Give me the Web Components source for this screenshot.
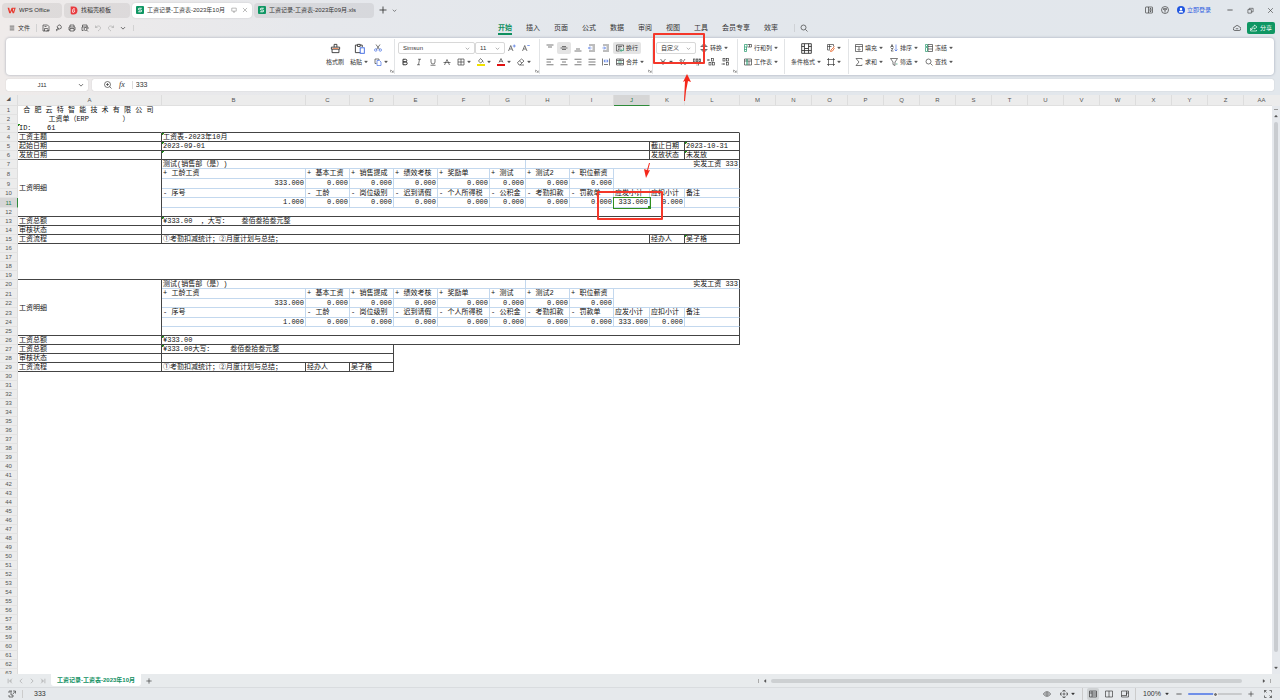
<!DOCTYPE html>
<html lang="zh-CN">
<head>
<meta charset="utf-8">
<title>工资记录-工资表-2023年10月</title>
<style>
  html, body { height: 100%; }
  body {
    margin: 0;
    font: 6px/8px "Liberation Sans", "Noto Sans CJK SC", sans-serif;
    color: #333;
    --green: #0f8f5f;
    --caret: #555;
  }
</style>
</head>
<body>
<wps-app>
  <title-bar slot="title">
    <doc-tab icon="wps" style="--w:60px;--pad:5px;--size:9px">WPS Office</doc-tab>
    <doc-tab icon="docer" style="--w:66px;--pad:5px;--size:9px">找稻壳模板</doc-tab>
    <doc-tab icon="sheet" active style="--w:120px">工资记录-工资表-2023年10月</doc-tab>
    <doc-tab icon="sheet" style="--w:120px">工资记录-工资表-2023年09月.xls</doc-tab>
  </title-bar>
  <menu-bar slot="menu">
    <menu-tab active>开始</menu-tab>
    <menu-tab>插入</menu-tab>
    <menu-tab>页面</menu-tab>
    <menu-tab>公式</menu-tab>
    <menu-tab>数据</menu-tab>
    <menu-tab>审阅</menu-tab>
    <menu-tab>视图</menu-tab>
    <menu-tab>工具</menu-tab>
    <menu-tab>会员专享</menu-tab>
    <menu-tab>效率</menu-tab>
  </menu-bar>
  <ribbon-bar slot="ribbon">
    <ribbon-group launcher style="--group:67px">
      <ribbon-row>
        <tool-button icon="brush" label="格式刷" big style="--w:24px"></tool-button>
        <tool-button icon="paste" label="粘贴" caret big style="--w:24px"></tool-button>
        <ribbon-stack>
          <tool-button icon="cut" title="剪切" style="--w:18px"></tool-button>
          <tool-button icon="copy" title="复制" caret style="--w:18px"></tool-button>
        </ribbon-stack>
      </ribbon-row>
    </ribbon-group>
    <ribbon-group launcher style="--group:137px">
      <ribbon-stack>
        <ribbon-row>
          <drop-box name="字体" value="Simsun" style="--w:77px"></drop-box>
          <drop-box name="字号" value="11" style="--w:30px"></drop-box>
          <tool-button icon="fontUp" title="增大字号"></tool-button>
          <tool-button icon="fontDown" title="减小字号"></tool-button>
        </ribbon-row>
        <ribbon-row>
          <tool-button icon="bold" title="加粗"></tool-button>
          <tool-button icon="italic" title="倾斜"></tool-button>
          <tool-button icon="underline" title="下划线"></tool-button>
          <tool-button icon="strike" title="删除线"></tool-button>
          <tool-button icon="border" title="边框" caret style="--w:20px"></tool-button>
          <tool-button icon="fill" title="填充颜色" caret style="--w:20px"></tool-button>
          <tool-button icon="fontColor" title="字体颜色" caret style="--w:20px"></tool-button>
          <tool-button icon="eraser" title="清除" caret style="--w:20px"></tool-button>
        </ribbon-row>
      </ribbon-stack>
    </ribbon-group>
    <ribbon-group launcher style="--group:105px">
      <ribbon-stack>
        <ribbon-row>
          <tool-button icon="vTop" title="顶端对齐"></tool-button>
          <tool-button icon="vMid" title="垂直居中" pressed></tool-button>
          <tool-button icon="vBottom" title="底端对齐"></tool-button>
          <tool-button icon="outdent" title="减少缩进"></tool-button>
          <tool-button icon="indent" title="增加缩进"></tool-button>
          <tool-button icon="wrap" label="换行" pressed style="--w:28px"></tool-button>
        </ribbon-row>
        <ribbon-row>
          <tool-button icon="left" title="左对齐"></tool-button>
          <tool-button icon="center" title="居中"></tool-button>
          <tool-button icon="right" title="右对齐"></tool-button>
          <tool-button icon="justify" title="两端对齐"></tool-button>
          <tool-button icon="spread" title="分散对齐"></tool-button>
          <tool-button icon="merge" label="合并" caret style="--w:34px"></tool-button>
        </ribbon-row>
      </ribbon-stack>
    </ribbon-group>
    <ribbon-group launcher note style="--group:77px">
      <ribbon-stack>
        <ribbon-row>
          <drop-box name="数字格式" value="自定义" style="--w:40px"></drop-box>
          <tool-button icon="convert" label="转换" caret style="--w:36px;--pad:4px"></tool-button>
        </ribbon-row>
        <ribbon-row>
          <tool-button icon="yen" title="货币" caret style="--w:20px"></tool-button>
          <tool-button icon="percent" title="百分比"></tool-button>
          <tool-button icon="thousand" title="千位分隔"></tool-button>
          <tool-button icon="decMore" title="增加小数位"></tool-button>
          <tool-button icon="decLess" title="减少小数位"></tool-button>
        </ribbon-row>
      </ribbon-stack>
    </ribbon-group>
    <ribbon-group style="--group:43px">
      <ribbon-stack>
        <tool-button icon="rowcol" label="行和列" caret style="--w:38px"></tool-button>
        <tool-button icon="worksheet" label="工作表" caret style="--w:38px"></tool-button>
      </ribbon-stack>
    </ribbon-group>
    <ribbon-group style="--group:60px">
      <ribbon-row>
        <tool-button icon="condition" label="条件格式" caret big style="--w:36px"></tool-button>
        <ribbon-stack>
          <tool-button icon="tableStyle" title="表格样式" caret style="--w:22px"></tool-button>
          <tool-button icon="cellStyle" title="单元格" caret style="--w:22px"></tool-button>
        </ribbon-stack>
      </ribbon-row>
    </ribbon-group>
    <ribbon-group last style="--group:108px">
      <ribbon-stack>
        <ribbon-row>
          <tool-button icon="fillDown" label="填充" caret style="--w:35px;--pad:3px"></tool-button>
          <tool-button icon="sort" label="排序" caret style="--w:35px;--pad:3px"></tool-button>
          <tool-button icon="freeze" label="冻结" caret style="--w:35px;--pad:3px"></tool-button>
        </ribbon-row>
        <ribbon-row>
          <tool-button icon="sum" label="求和" caret style="--w:35px;--pad:3px"></tool-button>
          <tool-button icon="filter" label="筛选" caret style="--w:35px;--pad:3px"></tool-button>
          <tool-button icon="search" label="查找" caret style="--w:35px;--pad:3px"></tool-button>
        </ribbon-row>
      </ribbon-stack>
    </ribbon-group>
  </ribbon-bar>
  <formula-bar slot="formula" cell="J11" value="333"></formula-bar>
  <sheet-grid slot="grid"></sheet-grid>
  <sheet-tabs slot="tabs">工资记录-工资表-2023年10月</sheet-tabs>
  <status-bar slot="status">333</status-bar>
</wps-app>

<script>
// 图标: 全部画在 16x16 里
const ICONS = {
  wps: '<path d="M1 3h3l1.500 7L8 3.500h2L11.500 10 13 5H8.500V3H15.500L12.500 13h-2.500L8.500 8.500 6.500 13H4z" fill="#e8392f" stroke="none"/>',
  docer: '<path d="M3 1h5a7 7 0 0 1 0 14H5a2 2 0 0 1-2-2z" fill="#e83a3e" stroke="none"/><path d="M6.500 11.500V6.500L9 4v3.500a2 2 0 1 1-2.500 3" stroke="#fff" stroke-width="1.400"/>',
  sheet: '<rect width="16" height="16" rx="2" fill="#0f9663" stroke="none"/><path d="M11.500 4.500H6.500a1.500 1.500 0 0 0 0 3.500h3a1.700 1.700 0 0 1 0 3.500H4.500" stroke="#fff" stroke-width="1.900"/>',
  monitor: '<path d="M2 3h12v8H2zM6 14h4M8 11v3"/>',
  close: '<path d="M2.500 2.500l11 11M13.500 2.500l-11 11"/>',
  plus: '<path d="M8 1v14M1 8h14" stroke-width="1.700"/>',
  minus: '<path d="M1 8h14" stroke-width="2"/>',
  chevron: '<path d="M2.500 5.500L8 11l5.500-5.500" stroke-width="1.800"/>',
  hamburger: '<path d="M2 3h12M2 8h12M2 13h12" stroke-width="1.800"/>',
  save: '<path d="M2 2h9l3 3v9H2zM5 14V9h6v2M5 5h4M9 14l5-2"/>',
  exportIt: '<path d="M6 9a4 4 0 1 1 3 1H6zM6 7v4l-4 3M2 11h2"/>',
  print: '<path d="M4 6V2h8v4M4 12H2V6h12v6h-2M4 9h8v5H4z"/>',
  preview: '<path d="M3 6V2h9v4M5 13H2V6h12v4"/><circle cx="9" cy="10" r="3"/><path d="M11 12l3 3"/>',
  undo: '<path d="M3 3v4h4M3 7c3-4 9-4 10 0 0 3-2 5-5 7" stroke="#aaa"/>',
  redo: '<path d="M13 3v4H9M13 7C10 3 4 3 3 7c0 3 2 5 5 7" stroke="#aaa"/>',
  search: '<circle cx="7" cy="7" r="5"/><path d="M11 11l4 4"/>',
  panels: '<rect x="1" y="2" width="14" height="12" rx="1"/><path d="M7 2v12M10 5h2v6h-2z"/>',
  cube: '<circle cx="8" cy="8" r="7"/><path d="M4 6l4 2 4-2M8 8v5M4 6l4-1 4 1"/>',
  user: '<circle cx="8" cy="8" r="8" fill="#1f55e0" stroke="none"/><circle cx="8" cy="6" r="2.500" fill="#fff" stroke="none"/><path d="M3.500 13a4.500 4 0 0 1 9 0z" fill="#fff" stroke="none"/>',
  restore: '<path d="M2 6h8v8H2zM5 6V3h9v8h-4"/>',
  cloud: '<path d="M4 13a3.500 3.500 0 0 1 0-7 4.500 4.500 0 0 1 8.500 0A3.500 3.500 0 0 1 12 13zM5.500 9.500h5"/>',
  share: '<path d="M9 2l5 4-5 4V8C6 8 4 9 3 12c0-5 2-7 6-8zM1 8v6h12v-2"/>',
  brush: '<path d="M2 6h12v3H2zM3 9v5h10V9M6 6V2h4v4"/><path d="M4 8h8" stroke="#ee8a5a"/>',
  paste: '<path d="M9 14H2V3h3M9 3h3v3M5 2h4v3H5z"/><rect x="9" y="7" width="6" height="8" stroke="#3a66e0"/>',
  cut: '<path d="M4 1l7 10M12 1L5 11"/><circle cx="3.500" cy="12" r="2.500" stroke="#3a66e0"/><circle cx="12.500" cy="12" r="2.500" stroke="#3a66e0"/>',
  copy: '<path d="M10 4V2H2v9h3"/><path d="M6 5h5l3 3v7H6z" stroke="#3a66e0"/>',
  fontUp: '<path d="M1 14L5.500 3 10 14M3 10h5"/><path d="M12.500 1v6M9.500 4h6" stroke="#3a66e0"/>',
  fontDown: '<path d="M1 14L5.500 3 10 14M3 10h5"/><path d="M10.500 3h5" stroke="#3a66e0"/>',
  bold: '<path d="M4 2.500h5a2.600 2.600 0 0 1 0 5.300H4zM4 7.800h5.500a2.800 2.800 0 0 1 0 5.700H4z" stroke-width="2"/>',
  italic: '<path d="M6 2.500h6M4 13.500h6M9 2.500l-2 11"/>',
  underline: '<path d="M4 2v6a4 4 0 0 0 8 0V2M3 14.500h10"/>',
  strike: '<path d="M3 14l5-11 5 11M1 9h14"/>',
  border: '<path d="M2 2h12v12H2zM2 8h12M8 2v12"/>',
  fill: '<path d="M7 1l5 5-5 4-4-4zM12 7l1 2"/><path d="M0 14h16" stroke="#f0e000" stroke-width="4"/>',
  fontColor: '<path d="M4 9l4-8 4 8M5.500 6.500h5"/><path d="M0 14h16" stroke="#e01010" stroke-width="4"/>',
  eraser: '<path d="M1 9l8-7 5 4-8 8H4zM5 6l5 4M6 14h8"/>',
  vTop: '<path d="M1 2h14M4 6h8"/>',
  vMid: '<path d="M4 5h8M1 8h14M4 11h8"/>',
  vBottom: '<path d="M4 10h8M1 14h14"/>',
  outdent: '<path d="M2 2h12M9 6h5M9 10h5M2 14h12"/><path d="M7 8H1M4 5L1 8l3 3" stroke="#3a66e0"/>',
  indent: '<path d="M2 2h12M9 6h5M9 10h5M2 14h12"/><path d="M1 8h6M4 5l3 3-3 3" stroke="#3a66e0"/>',
  wrap: '<path d="M7 14H1V2h14v5M4 5h8M4 8h5M4 11h3"/><path d="M15 8v5H9M11 10l-3 3 3 2" stroke="#0f8f5f"/>',
  left: '<path d="M1 2.500h14M1 8h9M1 13.500h14"/>',
  center: '<path d="M1 2.500h14M4 8h8M1 13.500h14"/>',
  right: '<path d="M1 2.500h14M6 8h9M1 13.500h14"/>',
  justify: '<path d="M1 2.500h14M1 8h14M1 13.500h14"/>',
  spread: '<path d="M1 1v14M15 1v14M4 13h8"/><path d="M4 6h8M6 3L4 6l2 3M10 3l2 3-2 3" stroke="#3a66e0"/>',
  merge: '<path d="M1 2h14v12H1zM1 5h14M1 11h14M8 2v3M8 11v3"/><path d="M4 8h8" stroke="#0f8f5f"/>',
  convert: '<path d="M4 5V2h8v3M4 11v3h8v-3M1 5h5M10 5h5M1 11h5M10 11h5"/>',
  yen: '<path d="M3 2l5 6 5-6M8 8v6M4 8h8M4 11h8"/>',
  percent: '<path d="M12 2L4 14"/><circle cx="4" cy="5" r="2"/><circle cx="12" cy="11" r="2"/>',
  thousand: '<rect x="1" y="2" width="3" height="6"/><rect x="6.500" y="2" width="3" height="6"/><rect x="12" y="2" width="3" height="6"/><path d="M5 11h8M8 13v2M11 12v3"/>',
  decMore: '<path d="M1 4h5M3 2L1 4l2 2"/><rect x="9" y="1" width="4" height="5"/><rect x="4" y="9" width="4" height="5"/><rect x="11" y="9" width="4" height="5"/>',
  decLess: '<rect x="4" y="1" width="4" height="5"/><rect x="11" y="1" width="4" height="5"/><path d="M1 12h6M5 10l2 2-2 2"/><rect x="11" y="9" width="4" height="5"/>',
  rowcol: '<path d="M7 1h8v5H7M11 1v5" /><path d="M1 1h5v5H1zM1 6v9h4V6M1 11h4" stroke="#0f8f5f"/>',
  worksheet: '<path d="M1 2h14v12H1zM1 6h14M10 6v8"/><path d="M6 2v12" stroke="#0f8f5f" stroke-width="2"/>',
  condition: '<path d="M1 1h14v14H1zM5 1v14M11 1v14M1 5h4M11 5h4M1 11h14M5 8h6"/>',
  tableStyle: '<path d="M13 5V1H1v11h5M1 5h8M5 1v10"/><path d="M15 5l-7 7-1 3 4-1 4-6" stroke="#e9703a" stroke-width="1.800"/>',
  cellStyle: '<path d="M3 0v16M13 0v16M0 3h16M0 13h16"/>',
  fillDown: '<path d="M1 1h14v14H1zM1 5h14M8 6v6M5 10l3 3 3-3"/>',
  sort: '<path d="M1 7l3-6 3 6M2 5h4M2 9h4l-4 5h5"/><path d="M12 1v13M9 11l3 3 3-3" stroke="#3a66e0"/>',
  freeze: '<path d="M6 1h9v14H6zM6 5h9M6 10h9"/><path d="M1 1h4v4H1zM1 7h4v8H1z" stroke="#0f8f5f"/>',
  sum: '<path d="M14 3V1H2l6 7-6 7h12v-2"/>',
  filter: '<path d="M1 1h14L10 8v7l-4-2V8z"/><path d="M12 12h3" stroke="#0f8f5f"/>',
  zoomFx: '<circle cx="7" cy="7" r="6"/><path d="M11 11l4 4M4 7h6M7 4v6"/>',
  launcher: '<path d="M2 3v10M13 6v7H6M4 4l9 9" stroke-width="2"/>',
  first: '<path d="M3 2v12M13 2L7 8l6 6M7 8h6"/>',
  prev: '<path d="M11 2L5 8l6 6"/>',
  next: '<path d="M5 2l6 6-6 6"/>',
  last: '<path d="M13 2v12M3 2l6 6-6 6M3 8h6"/>',
  macro: '<path d="M2 6V2h6M2 10v4h8v-4M6 2v8h4M10 2h5v5M14 3l-4 5"/>',
  eye: '<path d="M1 8c3-6 11-6 14 0-3 6-11 6-14 0z"/><circle cx="8" cy="8" r="2.500"/>',
  target: '<circle cx="8" cy="8" r="2"/><path d="M6 4V1h4v3M6 12v3h4v-3M4 6H1v4h3M12 6h3v4h-3"/>',
  viewNormal: '<path d="M1 2h14v12H1zM1 6h14M6 2v12M6 10h9"/>',
  viewBreak: '<path d="M1 2h14v12H1zM8 2v12"/>',
  viewPage: '<path d="M1 2h14v12H1zM1 11h10V6M11 6h4M11 2v9"/>',
  full: '<path d="M1 5V1h4M11 1h4v4M15 11v4h-4M5 15H1v-4M1 1l4 4M15 15l-4-4"/>',
  triUp: '<path d="M2 12h12L8 4z" fill="currentColor"/>',
  triDown: '<path d="M2 4h12l-6 8z" fill="currentColor"/>',
  triLeft: '<path d="M12 2v12L4 8z" fill="currentColor"/>',
  triRight: '<path d="M4 2v12l8-6z" fill="currentColor"/>',
};

const svg = (name, size = 10) =>
  `<svg width="${size}" height="${size}" viewBox="0 0 16 16" fill="none" stroke="currentColor" stroke-width="1.300" aria-hidden="true">${ICONS[name]}</svg>`;

// 所有元素共用的基础样式
const BASE = `
  * { box-sizing: border-box; }
  :host { display: block; }
  svg { display: block; flex: none; }
  button, input, select {
    font: inherit; color: inherit; background: none;
    border: 0; margin: 0; padding: 0; outline: none;
  }
  button { display: flex; align-items: center; white-space: nowrap; }
`;

class Base extends HTMLElement {
  connectedCallback() {
    if (this.shadowRoot) return;
    this.attachShadow({ mode: 'open' });
    this.shadowRoot.innerHTML = `<style>${BASE}${this.css()}</style>${this.html()}`;
  }
  css() { return ''; }
  html() { return '<slot></slot>'; }
}

class WpsApp extends Base {
  css() {
    return `
      :host {
        display: flex; flex-direction: column; height: 100vh; overflow: hidden;
        background: linear-gradient(90deg, #efebea 0, #e6e8ec 25%, #e3e7ec 50%, #e2e7ec 100%);
      }
      slot { display: contents; }
    `;
  }
  html() {
    return ['title', 'menu', 'ribbon', 'formula', 'grid', 'tabs', 'status']
      .map(n => `<slot name="${n}"></slot>`).join('');
  }
}
customElements.define('wps-app', WpsApp);

class TitleBar extends Base {
  css() {
    return `
      :host { display: flex; align-items: center; height: 20px; padding-left: 2px; flex: none; }
      .tabs { display: flex; gap: 2px; }
      .new { display: flex; gap: 5px; padding-left: 5px; align-items: center; }
      .win { margin-left: auto; display: flex; align-items: center; }
      .win button { width: 16px; justify-content: center; }
      .win .login { width: auto; gap: 2px; color: #2c5be0; margin: 0 9px 0 4px; }
      .win .sys { width: 20px; }
    `;
  }
  html() {
    return `
      <div class="tabs"><slot></slot></div>
      <div class="new">
        <button aria-label="新建">${svg('plus', 8)}</button>
        <button aria-label="更多">${svg('chevron', 5)}</button>
      </div>
      <div class="win">
        <button aria-label="窗口">${svg('panels', 8)}</button>
        <button aria-label="应用">${svg('cube', 8)}</button>
        <button class="login">${svg('user', 8)}立即登录</button>
        <button class="sys" aria-label="最小化">${svg('minus', 6)}</button>
        <button class="sys" aria-label="还原">${svg('restore', 7)}</button>
        <button class="sys" aria-label="关闭">${svg('close', 7)}</button>
      </div>`;
  }
}
customElements.define('title-bar', TitleBar);

class DocTab extends Base {
  css() {
    return `
      button {
        width: var(--w); height: 15px; padding: 0 var(--pad, 4px); gap: 3px;
        border-radius: 4px; background: rgba(90, 80, 80, .1);
      }
      :host([active]) button { background: #fff; box-shadow: 0 0 2px rgba(0,0,0,.15); }
      span { overflow: hidden; }
      .end { display: flex; gap: 5px; margin-left: auto; color: #777; }
      svg { width: var(--size, 8px); height: var(--size, 8px); }
      .end svg { width: 6px; height: 6px; }
    `;
  }
  html() {
    const end = this.hasAttribute('active')
      ? `<i class="end">${svg('monitor', 6)}${svg('close', 6)}</i>` : '';
    return `<button>${svg(this.getAttribute('icon'))}<span><slot></slot></span>${end}</button>`;
  }
}
customElements.define('doc-tab', DocTab);

class MenuBar extends Base {
  css() {
    return `
      :host {
        display: grid; grid-template-columns: 1fr auto 1fr; align-items: center;
        height: 16px; padding: 0 5px 0 9px; flex: none;
      }
      .left, .mid, .right { display: flex; align-items: center; }
      .left { gap: 5px; }
      .file { gap: 3px; padding-right: 6px; border-right: 1px solid #d2d2d2; }
      .more { padding-right: 7px; border-right: 1px solid #d2d2d2; }
      .mid { gap: 14px; padding-left: 22px; font-size: 7px; }
      .find { padding-left: 5px; border-left: 1px solid #cfd2d6; margin-left: 2px; }
      .right { justify-content: flex-end; gap: 6px; }
      .share { height: 12px; gap: 2px; padding: 0 3px; border-radius: 2px; background: #0f9663; color: #fff; }
    `;
  }
  html() {
    const tools = [['save', '保存'], ['exportIt', '输出'], ['print', '打印'], ['preview', '预览'], ['undo', '撤销'], ['redo', '恢复']];
    return `
      <div class="left">
        <button class="file">${svg('hamburger', 6)}文件</button>
        ${tools.map(([i, t]) => `<button aria-label="${t}">${svg(i, 8)}</button>`).join('')}
        <button class="more" aria-label="更多">${svg('chevron', 6)}</button>
      </div>
      <div class="mid">
        <slot></slot>
        <button class="find" aria-label="搜索">${svg('search', 8)}</button>
      </div>
      <div class="right">
        <button aria-label="云">${svg('cloud', 8)}</button>
        <button class="share">${svg('share', 8)}分享</button>
      </div>`;
  }
}
customElements.define('menu-bar', MenuBar);

class MenuTab extends Base {
  css() {
    return `
      button { height: 13px; border-top: 2px solid transparent; border-bottom: 2px solid transparent; }
      :host([active]) button { color: var(--green); font-weight: bold; border-bottom-color: var(--green); }
    `;
  }
  html() { return '<button><slot></slot></button>'; }
}
customElements.define('menu-tab', MenuTab);

class RibbonBar extends Base {
  css() {
    return `
      :host { padding: 2px 6px 0; flex: none; }
      div {
        display: flex; justify-content: center; height: 37px; background: #fff;
        border-radius: 4px; box-shadow: 0 0 2px 1px rgba(120,130,150,.3);
      }
    `;
  }
  html() { return '<div><slot></slot></div>'; }
}
customElements.define('ribbon-bar', RibbonBar);

class RibbonGroup extends Base {
  css() {
    return `
      :host {
        display: flex; position: relative; height: 35px; margin-top: 1px;
        padding-left: 3px; border-right: 1px solid #e2e4e6;
      }
      :host([last]) { border-right: 0; }
      .in { width: var(--group); padding-top: 3px; }
      .go { align-self: flex-end; width: 4px; padding-bottom: 1px; color: #555; }
      .box {
        position: absolute; left: 0; top: -6px; width: 52px; height: 31px;
        border: 2px solid #f4372a; border-radius: 1px; pointer-events: none;
      }
      .arrow { position: absolute; left: 26px; top: 35px; z-index: 2; }
    `;
  }
  html() {
    // 红框和箭头: 数字格式的批注
    const note = this.hasAttribute('note') ? `
      <div class="box"></div>
      <svg class="arrow" width="14" height="28" viewBox="0 0 14 28"><path d="M5 27l1-20-2 1 4-8 4 8-3-1-2 10-1 10z" fill="#f4271a"/></svg>` : '';
    const go = this.hasAttribute('launcher')
      ? `<button class="go" aria-label="更多设置">${svg('launcher', 4)}</button>` : '';
    return `<div class="in"><slot></slot></div>${go}${note}`;
  }
}
customElements.define('ribbon-group', RibbonGroup);

class RibbonStack extends Base {
  css() { return ':host { display: flex; flex-direction: column; gap: 2px; }'; }
}
customElements.define('ribbon-stack', RibbonStack);

class RibbonRow extends Base {
  css() { return ':host { display: flex; align-items: center; }'; }
}
customElements.define('ribbon-row', RibbonRow);

class ToolButton extends Base {
  css() {
    return `
      button { width: var(--w, 14px); height: 12px; gap: 2px; padding: 0 0 0 var(--pad, 3px); border-radius: 2px; }
      svg { width: 8px; height: 8px; }
      svg.caret { width: 4px; height: 4px; color: var(--caret); }
      :host([pressed]) button { background: #e4e4e4; }
      :host([big]) button {
        height: 26px; flex-direction: column; justify-content: space-between; padding: 1px 0 2px;
      }
      :host([big]) .icon svg { width: 11px; height: 11px; }
      .text { display: flex; align-items: center; gap: 2px; }
    `;
  }
  html() {
    const label = this.getAttribute('label') || '';
    const caret = this.hasAttribute('caret')
      ? svg('triDown', 4).replace('<svg', '<svg class="caret"') : '';
    const text = label || caret ? `<span class="text">${label}${caret}</span>` : '';
    const name = label || this.title;
    return `<button aria-label="${name}"><span class="icon">${svg(this.getAttribute('icon'))}</span>${text}</button>`;
  }
}
customElements.define('tool-button', ToolButton);

class DropBox extends Base {
  css() {
    return `
      label { display: grid; grid-template-columns: 1fr 9px; align-items: center; width: var(--w);
        height: 12px; border: 1px solid #d8d8d8; border-radius: 2px; background: #fff; }
      select { appearance: none; grid-area: 1 / 1 / 2 / 3; height: 10px; padding-left: 4px; width: 100%; line-height: 10px; }
      svg { grid-area: 1 / 2; color: #777; pointer-events: none; }
    `;
  }
  html() {
    return `<label><select aria-label="${this.getAttribute('name')}"><option>${this.getAttribute('value')}</option></select>${svg('chevron', 5)}</label>`;
  }
}
customElements.define('drop-box', DropBox);

class FormulaBar extends Base {
  css() {
    return `
      :host { display: flex; gap: 4px; padding: 4px 6px 4px; flex: none; }
      .cell, .fx { display: flex; align-items: center; height: 12px; background: #fff; border-radius: 2px; box-shadow: 0 0 1px rgba(0,0,0,.25); }
      .cell { width: 82px; padding-right: 4px; }
      .cell input { flex: 1; min-width: 0; text-align: center; }
      .fx { flex: 1; padding-left: 12px; gap: 7px; }
      .fx input { flex: 1; border-left: 1px solid #ddd; padding-left: 3px; font-size: 7px; }
      em { font: italic 8px/8px "Liberation Serif", serif; }
    `;
  }
  html() {
    return `
      <div class="cell"><input aria-label="名称框" value="${this.getAttribute('cell')}">${svg('chevron', 6)}</div>
      <div class="fx">${svg('zoomFx', 8)}<em>fx</em><input aria-label="编辑栏" value="${this.getAttribute('value')}"></div>`;
  }
}
customElements.define('formula-bar', FormulaBar);

// 列宽 A..L, 之后每列 36
const WIDTHS = [144, 144, 44, 44, 44, 52, 36, 44, 44, 36, 35, 55];
const COLS = [...'ABCDEFGHIJKLMNOPQRSTUVWXYZ', 'AA'];
const ROWS = 63;
const TALL = [8, 9, 11, 21, 23];

// [文字, 跨列, class, 跨行]
const plusRow = [
  ['+ 工龄工资', 1, 'b'], ['+ 基本工资', 1, 'b'], ['+ 销售提成', 1, 'b'], ['+ 绩效考核', 1, 'b'],
  ['+ 奖励单', 1, 'b'], ['+ 测试', 1, 'b'], ['+ 测试2', 1, 'b'], ['+ 职位薪资', 1, 'b'], ['', 3, 'b rk', 2],
];
const minusRow = [
  ['- 序号', 1, 'b'], ['- 工龄', 1, 'b'], ['- 岗位级别', 1, 'b'], ['- 迟到请假', 1, 'b'],
  ['- 个人所得税', 1, 'b'], ['- 公积金', 1, 'b'], ['- 考勤扣款', 1, 'b'], ['- 罚款单', 1, 'b'],
  ['应发小计', 1, 'b'], ['应扣小计', 1, 'b'], ['备注', 1, 'b rk'],
];
const zero = ['0.000', 1, 'b n'];
const plusNums = [['333.000', 1, 'b n'], zero, zero, zero, zero, zero, zero, zero];
const minusNums = sel => [
  ['1.000', 1, 'b n'], zero, zero, zero, zero, zero, zero, zero,
  ['333.000', 1, sel ? 'b n sel' : 'b n'], ['0.000', 1, 'b n'], ['', 1, 'b rk'],
];
const detailHead = [
  ['工资明细', 1, 'k', 6], ['测试(销售部（是）)', 6, 'b'], ['实发工资 333', 5, 'b rk n'],
];

const DATA = {
  1: [[' 合 肥 云 特 智 能 技 术 有 限 公 司']],
  2: [['       工资单（ERP        ）']],
  3: [['ID：   61', 1, 'bk t'], ['', 11, 'bk']],
  4: [['工资主题', 1, 'k'], ['工资表-2023年10月', 11, 'k t']],
  5: [['起始日期', 1, 'k'], ['2023-09-01', 9, 'k t'], ['截止日期', 1, 'k'], ['2023-10-31', 1, 'k t']],
  6: [['发放日期', 1, 'k'], ['', 9, 'k t'], ['发放状态', 1, 'k'], ['未发放', 1, 'k t']],
  7: detailHead,
  8: plusRow,
  9: plusNums,
  10: minusRow,
  11: minusNums(true),
  12: [['', 11, 'k']],
  13: [['工资总额', 1, 'k'], ['¥333.00  ，大写：   叁佰叁拾叁元整', 11, 'k t']],
  14: [['审核状态', 1, 'k'], ['', 11, 'k']],
  15: [['工资流程', 1, 'k'], ['①考勤扣减统计；②月度计划与总结；', 9, 'k'], ['经办人', 1, 'k'], ['吴子格', 1, 'k t']],
  19: [['', 12, 'bk']],
  20: detailHead,
  21: plusRow,
  22: plusNums,
  23: minusRow,
  24: minusNums(false),
  25: [['', 11, 'k']],
  26: [['工资总额', 1, 'k'], ['¥333.00', 11, 'k t']],
  27: [['工资总额', 1, 'k'], ['¥333.00大写：    叁佰叁拾叁元整', 3, 'k t']],
  28: [['审核状态', 1, 'k'], ['', 3, 'k']],
  29: [['工资流程', 1, 'k'], ['①考勤扣减统计；②月度计划与总结；', 1, 'k'], ['经办人', 1, 'k'], ['吴子格', 1, 'k']],
};

class SheetGrid extends Base {
  css() {
    return `
      :host { display: grid; grid-template-columns: 1fr 8px; flex: 1; min-height: 0; overflow: hidden; background: #fff; }
      .view { position: relative; overflow: hidden; min-width: 0; }
      table { table-layout: fixed; border-collapse: separate; border-spacing: 0; width: ${18 + WIDTHS.reduce((a, b) => a + b) + 36 * 15}px; }
      tr { height: 9px; }
      tr.tall { height: 10px; }
      thead tr { height: 11px; }
      th { padding: 0; font-weight: normal; font-size: 6px; line-height: 8px; color: #555; background: #ececec; text-align: center; }
      thead th { border-right: 1px solid #ddd; border-bottom: 1px solid #e0e0e0; }
      tbody th { border-right: 1px solid #ddd; border-bottom: 1px solid #e2e2e2; }
      thead th.on { background: #d6d6d6; color: #1f7a4a; border-bottom-color: #2e8b3a; }
      tbody th.on { background: #d6d6d6; color: #1f7a4a; border-right-color: #2e8b3a; }
      .corner { font-size: 4px; }
      td {
        padding: 0 1px; white-space: pre; color: #111; text-spacing-trim: space-all;
        font: 7px/8px "Liberation Mono", "Noto Sans CJK SC", monospace;
        border: 0 solid transparent; border-width: 0 1px 1px 0; vertical-align: middle;
      }
      tr.tall td { line-height: 9px; }
      .k { border-color: #444; }
      .bk { border-bottom-color: #444; }
      .b { border-color: #c3d8ee; }
      .rk { border-right-color: #444; }
      .n { text-align: right; }
      .t { background: linear-gradient(135deg, #1a8a1a 2px, transparent 2px) no-repeat; }
      .sel { outline: 1px solid #2f8f1f; position: relative; }
      .sel::after { content: ""; position: absolute; right: -2px; bottom: -2px; width: 3px; height: 3px; background: #2f8f1f; }
      .bar {
        background: #e6e9ed; border-top: 11px solid #ececec; display: flex; flex-direction: column;
        align-items: center; color: #555; padding: 3px 0 4px; gap: 4px;
      }
      .thumb { flex: 1; width: 4px; border-radius: 2px; background: #c9ccd0; margin: 0 0 10px; }
      .tick { width: 4px; height: 1px; background: #999; }
      .box {
        position: absolute; left: 597px; top: 96px; width: 66px; height: 29px;
        border: 2px solid #f4372a; border-radius: 1px; pointer-events: none;
      }
      .arrow { position: absolute; left: 642px; top: 68px; }
    `;
  }
  html() {
    const cols = COLS.map((_, i) => `<col style="width:${WIDTHS[i] || 36}px">`).join('');
    const head = COLS.map(c => `<th scope="col"${c === 'J' ? ' class="on"' : ''}>${c}</th>`).join('');
    let body = '';
    for (let r = 1; r <= ROWS; r++) {
      const cells = (DATA[r] || []).map(([text, span = 1, cls = '', rows = 1]) =>
        `<td class="${cls}" colspan="${span}" rowspan="${rows}">${text}</td>`).join('');
      body += `<tr${TALL.includes(r) ? ' class="tall"' : ''}><th scope="row"${r === 11 ? ' class="on"' : ''}>${r}</th>${cells}</tr>`;
    }
    return `
      <div class="view">
        <table>
          <colgroup><col style="width:18px">${cols}</colgroup>
          <thead><tr><th class="corner">◢</th>${head}</tr></thead>
          <tbody>${body}</tbody>
        </table>
        <div class="box"></div>
        <svg class="arrow" width="10" height="16" viewBox="0 0 10 16"><path d="M7 0L5 7l-3-1 2 9 4-8-2 .5L8 0z" fill="#f4271a"/></svg>
      </div>
      <div class="bar"><i class="tick"></i>${svg('triUp', 4)}<div class="thumb"></div>${svg('triDown', 4)}</div>`;
  }
}
customElements.define('sheet-grid', SheetGrid);

class SheetTabs extends Base {
  css() {
    return `
      :host { display: flex; align-items: flex-start; height: 13px; padding-left: 7px; flex: none; background: #e8ebed; border-bottom: 1px solid #d9dcdf; }
      .nav { display: flex; gap: 5px; align-self: center; color: #888; padding-right: 5px; }
      .tab { height: 12px; padding: 0 6px; background: #fff; color: var(--green); font-weight: bold; border-radius: 0 0 3px 3px; }
      .add { align-self: center; padding-left: 5px; }
      .scroll { margin-left: auto; width: 41%; display: flex; align-items: center; align-self: center; gap: 4px; padding-right: 9px; color: #555; }
      .thumb { flex: 1; height: 4px; border-radius: 2px; background: #cdd0d2; margin-right: 16px; }
      .tick { width: 1px; height: 4px; background: #aaa; }
    `;
  }
  html() {
    const nav = [['first', '第一张'], ['prev', '上一张'], ['next', '下一张'], ['last', '最后一张']];
    return `
      <div class="nav">${nav.map(([i, t]) => `<button aria-label="${t}">${svg(i, 6)}</button>`).join('')}</div>
      <button class="tab"><slot></slot></button>
      <button class="add" aria-label="新建工作表">${svg('plus', 6)}</button>
      <div class="scroll"><i class="tick"></i>${svg('triLeft', 4)}<div class="thumb"></div>${svg('triRight', 4)}<i class="tick"></i></div>`;
  }
}
customElements.define('sheet-tabs', SheetTabs);

class StatusBar extends Base {
  css() {
    return `
      :host { display: flex; align-items: center; height: 12px; padding: 0 8px; flex: none; background: #e6e9ec; }
      .val { border-left: 1px solid #ccc; margin-left: 6px; padding-left: 11px; font-size: 7px; }
      .right { margin-left: auto; display: flex; align-items: center; }
      .right button { justify-content: center; gap: 3px; height: 12px; }
      .goto { margin: 0 7px 0 9px; }
      .view { width: 12px; margin-right: 4px; border-radius: 2px; }
      .views { display: flex; padding-left: 4px; border: 1px solid #ccc; border-width: 0 1px; }
      .right .on { background: #cfd2d4; }
      label { display: flex; align-items: center; gap: 2px; margin: 0 7px; }
      select { appearance: none; width: 20px; font-size: 7px; }
      input {
        appearance: none; width: 54px; height: 2px; margin: 0 6px; border-radius: 1px;
        background: linear-gradient(90deg, #6f8fe8 50%, #c8cacc 50%);
      }
      input::-webkit-slider-thumb { appearance: none; width: 5px; height: 5px; border-radius: 50%; background: #777; border: 1px solid #fff; }
      .full { margin-left: 10px; }
    `;
  }
  html() {
    return `
      <button aria-label="录制">${svg('macro', 8)}</button>
      <span class="val"><slot></slot></span>
      <div class="right">
        <button aria-label="护眼">${svg('eye', 8)}</button>
        <button class="goto" aria-label="定位">${svg('target', 8)}${svg('triDown', 4)}</button>
        <div class="views">
          <button class="view on" aria-label="普通视图">${svg('viewNormal', 8)}</button>
          <button class="view" aria-label="分页预览">${svg('viewBreak', 8)}</button>
          <button class="view" aria-label="页面布局">${svg('viewPage', 8)}</button>
        </div>
        <label><select aria-label="缩放"><option>100%</option></select>${svg('triDown', 4)}</label>
        <button aria-label="缩小">${svg('minus', 6)}</button>
        <input type="range" min="10" max="190" value="100" aria-label="缩放比例">
        <button aria-label="放大">${svg('plus', 6)}</button>
        <button class="full" aria-label="全屏">${svg('full', 8)}</button>
      </div>`;
  }
}
customElements.define('status-bar', StatusBar);
</script>
</body>
</html>
